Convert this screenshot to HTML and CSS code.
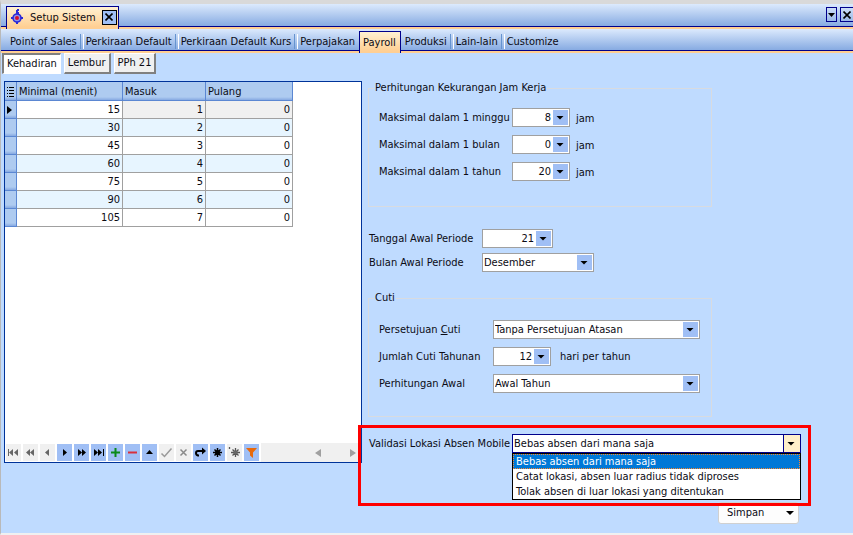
FILE: index.html
```html
<!DOCTYPE html>
<html lang="id">
<head>
<meta charset="utf-8">
<title>Setup Sistem</title>
<link rel="stylesheet" href="styles.css">
</head>
<body>
<header class="titlebar">
  <div class="window-tab">
    <svg class="app-icon" width="14" height="16" viewBox="0 0 14 16" aria-hidden="true">
      <path d="M7 1v14M1 9h12M7 1h2M7 4h2" stroke="#2a2ad8" stroke-width="2" fill="none"/>
      <circle cx="7" cy="9" r="4" fill="#8f93e8" stroke="#2a2ad8" stroke-width="1.6"/>
      <circle cx="7" cy="9" r="2" fill="#d8102c"/>
    </svg>
    <span>Setup Sistem</span>
    <button class="tab-close" type="button" aria-label="Tutup tab">
      <svg width="8" height="8" viewBox="0 0 8 8"><path d="M0.5 0.5l7 7M7.5 0.5l-7 7" stroke="#000" stroke-width="1.6"/></svg>
    </button>
  </div>
  <div class="window-tools">
    <button class="tool" type="button" aria-label="Daftar tab">
      <svg width="7" height="4" viewBox="0 0 7 4"><path d="M0 0h7L3.500 4z"/></svg>
    </button>
    <button class="tool tool-close" type="button" aria-label="Tutup">
      <svg width="8" height="8" viewBox="0 0 8 8"><path d="M0.5 0.5l7 7M7.5 0.5l-7 7" stroke="#000" stroke-width="1.6"/></svg>
    </button>
  </div>
</header>
<nav class="tabs">
  <a href="#pos">Point of Sales</a>
  <a href="#perkiraan">Perkiraan Default</a>
  <a href="#kurs">Perkiraan Default Kurs</a>
  <a href="#pajak" class="last">Perpajakan</a>
  <a href="#payroll" class="active">Payroll</a>
  <a href="#produksi">Produksi</a>
  <a href="#lain">Lain-lain</a>
  <a href="#customize" class="last">Customize</a>
</nav>
<main class="content">
  <section class="attendance">
    <div class="subtabs">
      <button type="button" class="pressed">Kehadiran</button>
      <button type="button">Lembur</button>
      <button type="button">PPh 21</button>
    </div>
    <div class="panel">
      <table class="grid">
        <colgroup><col class="c-mark"><col class="c-min"><col class="c-in"><col class="c-out"></colgroup>
        <thead>
          <tr>
            <th class="mark"><svg width="8" height="10" viewBox="0 0 8 10"><path d="M0 .5h1M2 .5h5M0 3.500h1M2 3.500h5M0 6.500h1M2 6.500h5M0 9.500h1M2 9.500h5" stroke="#000"/></svg></th>
            <th>Minimal (menit)</th><th>Masuk</th><th>Pulang</th>
          </tr>
        </thead>
        <tbody>
          <tr class="current"><td class="mark"><svg width="5" height="8" viewBox="0 0 5 8"><path d="M0 0l5 4-5 4z"/></svg></td><td>15</td><td>1</td><td>0</td></tr>
          <tr><td class="mark"></td><td>30</td><td>2</td><td>0</td></tr>
          <tr><td class="mark"></td><td>45</td><td>3</td><td>0</td></tr>
          <tr><td class="mark"></td><td>60</td><td>4</td><td>0</td></tr>
          <tr><td class="mark"></td><td>75</td><td>5</td><td>0</td></tr>
          <tr><td class="mark"></td><td>90</td><td>6</td><td>0</td></tr>
          <tr><td class="mark"></td><td>105</td><td>7</td><td>0</td></tr>
        </tbody>
      </table>
      <div class="navigator">
        <button type="button" class="off" aria-label="Pertama"><svg viewBox="0 0 15 17"><path d="M2 5h1v7H2zM7 5v7L3 8.500zM12 5v7L8 8.500z"/></svg></button>
        <button type="button" class="off" aria-label="Halaman sebelumnya"><svg viewBox="0 0 15 17"><path d="M7 5v7L3 8.500zM11 5v7L7 8.500z"/></svg></button>
        <button type="button" class="off" aria-label="Sebelumnya"><svg viewBox="0 0 15 17"><path d="M9 5v7L5 8.500z"/></svg></button>
        <button type="button" aria-label="Berikutnya"><svg viewBox="0 0 15 17"><path d="M6 5v7l4-3.500z"/></svg></button>
        <button type="button" aria-label="Halaman berikutnya"><svg viewBox="0 0 15 17"><path d="M4 5v7l4-3.500zM8 5v7l4-3.500z"/></svg></button>
        <button type="button" aria-label="Terakhir"><svg viewBox="0 0 15 17"><path d="M3 5v7l4-3.500zM7 5v7l4-3.500zM12 5h1v7h-1z"/></svg></button>
        <button type="button" aria-label="Tambah"><svg viewBox="0 0 15 17"><path d="M3 8.500h9M7.500 4v9" stroke="#0a8a1a" stroke-width="2"/></svg></button>
        <button type="button" aria-label="Hapus"><svg viewBox="0 0 15 17"><path d="M3 8.500h9" stroke="#d8303c" stroke-width="2"/></svg></button>
        <button type="button" aria-label="Ubah"><svg viewBox="0 0 15 17"><path d="M4 10h7L7.500 6z"/></svg></button>
        <button type="button" class="off" aria-label="Simpan baris"><svg viewBox="0 0 15 17"><path d="M2.500 9.500l3 3 7-8" stroke="#999" stroke-width="1.500" fill="none"/></svg></button>
        <button type="button" class="off" aria-label="Batal"><svg viewBox="0 0 15 17"><path d="M4.500 5.500l6 6M10.500 5.500l-6 6" stroke="#8a8a8a" stroke-width="1.500"/></svg></button>
        <button type="button" aria-label="Muat ulang"><svg viewBox="0 0 15 17"><path d="M10 7H5Q3 7 3 9t2 2.500h1" stroke="#000" stroke-width="2" fill="none"/><path d="M9 3.500v7l4-3.500z"/></svg></button>
        <button type="button" aria-label="Simpan posisi"><svg viewBox="0 0 15 17"><path d="M3 8.500h9M7.500 4v9M4.500 5.500l6 6M10.500 5.500l-6 6" stroke="#000" stroke-width="1.500"/><circle cx="7.500" cy="8.500" r="2.500"/></svg></button>
        <button type="button" class="off" aria-label="Ke posisi"><svg viewBox="0 0 15 17"><path d="M4 8.500h9M8.500 4v9M5.500 5.500l6 6M11.500 5.500l-6 6M2.500 3v2" stroke="#555" stroke-width="1.300"/><circle cx="8.500" cy="8.500" r="2"/></svg></button>
        <button type="button" aria-label="Saring"><svg viewBox="0 0 15 17"><path d="M2 4h11L9 8.500V14L6 11.500v-3z" fill="#e8690b"/></svg></button>
        <div class="scroll">
          <svg width="6" height="8" viewBox="0 0 6 8"><path d="M6 0v8L0 4z" fill="#a0a0a0"/></svg>
          <svg width="6" height="8" viewBox="0 0 6 8"><path d="M0 0v8l6-4z" fill="#a0a0a0"/></svg>
        </div>
      </div>
    </div>
  </section>
  <form class="settings">
    <fieldset class="hours">
      <legend>Perhitungan Kekurangan Jam Kerja</legend>
      <div class="row"><label for="minggu">Maksimal dalam 1 minggu</label><span class="combo number"><select id="minggu"><option>8</option></select></span><span class="unit">jam</span></div>
      <div class="row"><label for="bulan">Maksimal dalam 1 bulan</label><span class="combo number"><select id="bulan"><option>0</option></select></span><span class="unit">jam</span></div>
      <div class="row"><label for="tahun">Maksimal dalam 1 tahun</label><span class="combo number"><select id="tahun"><option>20</option></select></span><span class="unit">jam</span></div>
    </fieldset>
    <div class="period">
      <div class="row"><label for="tanggal">Tanggal Awal Periode</label><span class="combo number date"><select id="tanggal"><option>21</option></select></span></div>
      <div class="row"><label for="awal">Bulan Awal Periode</label><span class="combo month"><select id="awal"><option>Desember</option></select></span></div>
    </div>
    <fieldset class="leave">
      <legend>Cuti</legend>
      <div class="row"><label for="setuju">Persetujuan <u>C</u>uti</label><span class="combo wide"><select id="setuju"><option>Tanpa Persetujuan Atasan</option></select></span></div>
      <div class="row"><label for="jumlah">Jumlah Cuti Tahunan</label><span class="combo number"><select id="jumlah"><option>12</option></select></span><span class="suffix">hari per tahun</span></div>
      <div class="row"><label for="hitung">Perhitungan Awal</label><span class="combo wide"><select id="hitung"><option>Awal Tahun</option></select></span></div>
    </fieldset>
    <div class="validation">
      <label for="validasi">Validasi Lokasi Absen Mobile</label>
      <div class="open-combo">
        <span class="combo focused"><select id="validasi"><option>Bebas absen dari mana saja</option></select></span>
        <ul class="options" role="listbox" aria-label="Validasi Lokasi Absen Mobile">
          <li role="option" aria-selected="true">Bebas absen dari mana saja</li>
          <li role="option">Catat lokasi, absen luar radius tidak diproses</li>
          <li role="option">Tolak absen di luar lokasi yang ditentukan</li>
        </ul>
      </div>
      <div class="highlight"></div>
    </div>
    <button class="save" type="button"><span>Simpan</span><svg width="8" height="5" viewBox="0 0 8 5"><path d="M0 0h8L4 4z"/></svg></button>
  </form>
</main>
</body>
</html>
```

FILE: styles.css
```css
* { box-sizing: border-box; }

body {
  margin: 0;
  min-height: 100vh;
  display: flex;
  flex-direction: column;
  border: solid #d9d9d9;
  border-width: 4px 0 2px 1px;
  border-left-color: #b9b9b9;
  border-bottom-color: #f0f0f0;
  background: #bfdbff;
  color: #0b0b14;
  font: 11px/14px "DejaVu Sans Condensed", "DejaVu Sans", sans-serif;
}

button, select { font: inherit; color: inherit; }
button { display: flex; align-items: center; justify-content: center; padding: 0; }
svg { flex: none; }

/* Title bar */
.titlebar {
  display: flex;
  justify-content: space-between;
  height: 25px;
  padding: 2px 0 0 5px;
  background: linear-gradient(#dceafd, #87abe2 22px, #00008b 22px, #00008b 23px, #ffcf93 23px);
}
.window-tab {
  display: flex;
  align-items: center;
  gap: 6px;
  height: 23px;
  padding: 0 1px 2px 3px;
  border: 1px solid #00008b;
  border-bottom: 0;
  background: linear-gradient(#fff1d2, #ffcf93 20px);
}
.window-tab span { padding-top: 2px; }
.tab-close { width: 15px; height: 15px; border: 1px solid #000; background: #a0bff5; }
.window-tools { display: flex; gap: 3px; padding-top: 1px; }
.tool { width: 11px; height: 15px; border: 1px solid #00008b; background: none; }
.tool-close { width: 13px; border-right: 0; }

/* Main tabs */
.tabs {
  display: flex;
  height: 24px;
  padding: 2px 0 0 7px;
  background: linear-gradient(#dceafd, #87abe2 21px, #00008b 21px, #00008b 22px, #ffcf93 22px);
}
.tabs a {
  display: flex;
  height: 22px;
  align-items: center;
  padding: 0 0 0 2px;
  color: inherit;
  text-decoration: none;
}
.tabs a::after {
  content: "";
  width: 2px;
  height: 15px;
  margin: 0 0 2px 3px;
  border-left: 1px solid #6593cf;
  border-right: 1px solid #fff;
}
.tabs .active {
  margin-right: 2px;
  padding: 0 4px 0 3px;
  border: 1px solid #00008b;
  border-bottom: 0;
  background: linear-gradient(#fff1d2, #ffcf93 19px);
}
.tabs .last { padding-right: 4px; }
.tabs .active::after, .tabs .last::after { display: none; }

/* Page body */
.content {
  flex: 1;
  display: grid;
  grid-template-columns: minmax(0, 361fr) minmax(0, 491fr);
}
.attendance { display: flex; flex-direction: column; }
.subtabs { display: flex; gap: 3px; height: 28px; padding: 0 1px; }
.subtabs button {
  height: 21px;
  padding: 0 3px;
  border: 1px solid;
  border-width: 1px 2px 2px 1px;
  border-color: #fff #808080 #808080 #fff;
  background: #f0f0f0;
}
.subtabs .pressed {
  border-width: 2px 1px 1px 2px;
  border-color: #808080 #fff #fff #808080;
  background: #fff;
}
.panel {
  height: 382px;
  margin-left: 3px;
  display: flex;
  flex-direction: column;
  justify-content: space-between;
  border: 1px solid #003399;
  background: #fff;
}

/* Data grid */
.grid { width: 288px; table-layout: fixed; border-collapse: separate; border-spacing: 0; }
.c-mark { width: 12px; }
.c-min { width: 106px; }
.c-in { width: 83px; }
.c-out { width: 87px; }
.grid th {
  height: 19px;
  padding: 2px 0 0 2px;
  border-right: 1px solid #5b87d2;
  border-bottom: 1px solid #5b87d2;
  background: linear-gradient(#aecbf0 15px, #86a9e2);
  font-weight: normal;
  text-align: left;
}
.grid td {
  height: 18px;
  padding: 1px 2px 0;
  border-right: 1px solid #a0a0a0;
  border-bottom: 1px solid #a0a0a0;
  text-align: right;
}
.grid tbody tr:nth-child(even) { background: #e7f5ff; }
.grid .current td { background: #f0f0f0; }
.grid .current td:nth-child(2) { background: #fff; }
.grid tbody .mark, .grid tbody .current .mark {
  border-color: #5b87d2;
  background: linear-gradient(#aecbf0 14px, #86a9e2);
}
.mark svg { display: block; }

/* Record navigator */
.navigator { display: flex; gap: 2px; padding: 0 0 1px 1px; }
.navigator button { width: 15px; height: 17px; border: 0; background: #a0bff5; }
.navigator button.off { background: #f0f0f0; fill: #666; }
.navigator button svg { width: 15px; height: 17px; }
.scroll {
  flex: 1;
  display: flex;
  align-items: center;
  justify-content: flex-end;
  gap: 29px;
  padding-right: 5px;
  margin: -1px 0;
  background: #f0f0f0;
}

/* Settings form */
.settings { display: flex; flex-direction: column; padding: 28px 0 0 6px; white-space: nowrap; }
fieldset { min-width: 0; max-width: 344px; margin: 0; border: 1px solid #d8dbe0; }
legend { padding: 0 1px; }
.row { display: flex; align-items: center; height: 19px; }
.hours { height: 126px; padding: 13px 10px 0; }
.hours legend, .leave legend { margin-left: -5px; }
.hours .row { margin-bottom: 8px; }
.hours label { width: 133px; }
.period { display: grid; gap: 5px; padding: 22px 0 0 1px; }
.period label { width: 113px; }
.leave { height: 126px; margin-top: 19px; padding: 15px 10px 0; }
.leave .row { margin-bottom: 8px; }
.leave label { width: 114px; }
.unit { padding: 3px 0 0 6px; }
.suffix { padding-left: 9px; }

.combo { display: grid; width: 58px; height: 19px; border: 1px solid #a0a0a0; background: #fff; }
.combo select {
  grid-area: 1 / 1;
  min-width: 0;
  appearance: none;
  margin: 0;
  padding: 0 18px 0 1px;
  border: 0;
  border-radius: 0;
  background: none;
  outline: 0;
}
.combo::before {
  content: "";
  grid-area: 1 / 1;
  justify-self: end;
  width: 15px;
  margin: 1px;
  background: #a0bff5;
}
.combo::after {
  content: "";
  grid-area: 1 / 1;
  place-self: center end;
  width: 8px;
  height: 4px;
  margin-right: 5px;
  background: #000;
  clip-path: polygon(0 0, 100% 0, 50% 100%);
  pointer-events: none;
}
.number select { text-align: right; text-align-last: right; }
.date { width: 71px; }
.month { width: 112px; }
.wide { width: 207px; }

/* Opened list */
.validation { position: relative; display: flex; width: 443px; max-width: 100%; margin-top: 17px; padding: 0 10px 0 1px; height: 68px; }
.validation label { width: 143px; line-height: 19px; }
.open-combo { flex: 1; position: relative; }
.focused { width: 100%; border-color: #00008b; }
.focused::before { width: 16px; margin: 0; border-left: 1px solid #00008b; background: #ffefc9; }
.options {
  position: absolute;
  inset: 19px 0 auto;
  z-index: 1;
  margin: 0;
  padding: 0;
  list-style: none;
  border: 1px solid #000;
  background: #fff;
}
.options li { height: 15px; padding: 0 3px; line-height: 15px; }
.options li[aria-selected] { background: #0078d7; color: #fff; outline: 1px dotted #ff8728; outline-offset: -1px; }
.highlight { position: absolute; inset: -9px 0 -4px -10px; border: 3px solid #f00; pointer-events: none; }
.save {
  width: 81px;
  height: 22px;
  margin-left: 350px;
  padding: 0 4px 0 8px;
  justify-content: space-between;
  border: 1px solid #d0d0d0;
  border-radius: 3px;
  background: #fdfdfd;
}
```
